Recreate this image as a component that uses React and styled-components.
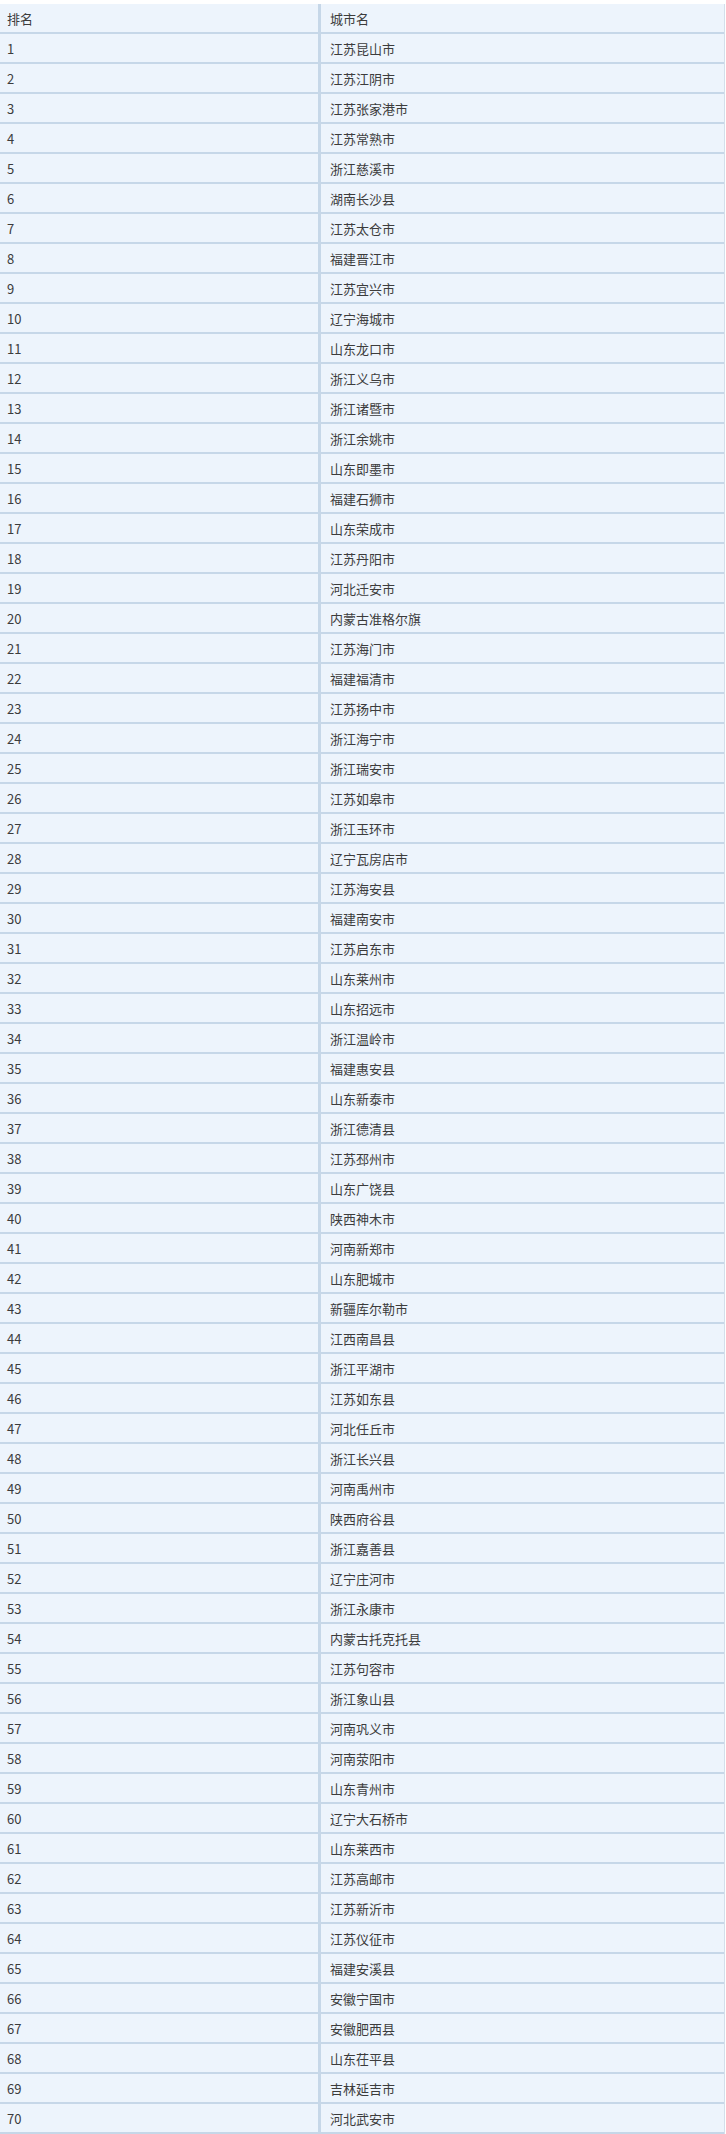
import React from 'react'
import styled, { createGlobalStyle } from 'styled-components'

const cities = [
  '江苏昆山市', '江苏江阴市', '江苏张家港市', '江苏常熟市', '浙江慈溪市',
  '湖南长沙县', '江苏太仓市', '福建晋江市', '江苏宜兴市', '辽宁海城市',
  '山东龙口市', '浙江义乌市', '浙江诸暨市', '浙江余姚市', '山东即墨市',
  '福建石狮市', '山东荣成市', '江苏丹阳市', '河北迁安市', '内蒙古准格尔旗',
  '江苏海门市', '福建福清市', '江苏扬中市', '浙江海宁市', '浙江瑞安市',
  '江苏如皋市', '浙江玉环市', '辽宁瓦房店市', '江苏海安县', '福建南安市',
  '江苏启东市', '山东莱州市', '山东招远市', '浙江温岭市', '福建惠安县',
  '山东新泰市', '浙江德清县', '江苏邳州市', '山东广饶县', '陕西神木市',
  '河南新郑市', '山东肥城市', '新疆库尔勒市', '江西南昌县', '浙江平湖市',
  '江苏如东县', '河北任丘市', '浙江长兴县', '河南禹州市', '陕西府谷县',
  '浙江嘉善县', '辽宁庄河市', '浙江永康市', '内蒙古托克托县', '江苏句容市',
  '浙江象山县', '河南巩义市', '河南荥阳市', '山东青州市', '辽宁大石桥市',
  '山东莱西市', '江苏高邮市', '江苏新沂市', '江苏仪征市', '福建安溪县',
  '安徽宁国市', '安徽肥西县', '山东茌平县', '吉林延吉市', '河北武安市',
]

const GlobalStyle = createGlobalStyle`
  html, body {
    margin: 0;
    padding: 0;
    background: #fff;
  }
  body {
    font-family: "Noto Sans CJK SC", "Noto Sans", sans-serif;
  }
`

const Page = styled.div`
  padding-top: 4px;
  width: 726px;
`

const Table = styled.div`
  width: 724px;
  border-right: 1px solid #d3dfeb;
`

const Row = styled.div`
  display: grid;
  grid-template-columns: 318px 1fr;
  height: 28px;
  border-bottom: 2px solid #c6d7e8;
  background: #edf4fc;
`

const Cell = styled.div`
  display: flex;
  align-items: center;
  padding-left: ${(p) => (p.second ? '9px' : '7px')};
  font-size: 13px;
  color: #3c3c3c;
  border-left: ${(p) => (p.second ? '3px solid #c6d7e8' : 'none')};
  white-space: nowrap;
`

const App = () => {
  return (
    <Page>
      <GlobalStyle />
      <Table>
        <Row>
          <Cell>排名</Cell>
          <Cell second>城市名</Cell>
        </Row>
        {cities.map((city, i) => (
          <Row key={i}>
            <Cell>{i + 1}</Cell>
            <Cell second>{city}</Cell>
          </Row>
        ))}
      </Table>
    </Page>
  )
}

export default App
